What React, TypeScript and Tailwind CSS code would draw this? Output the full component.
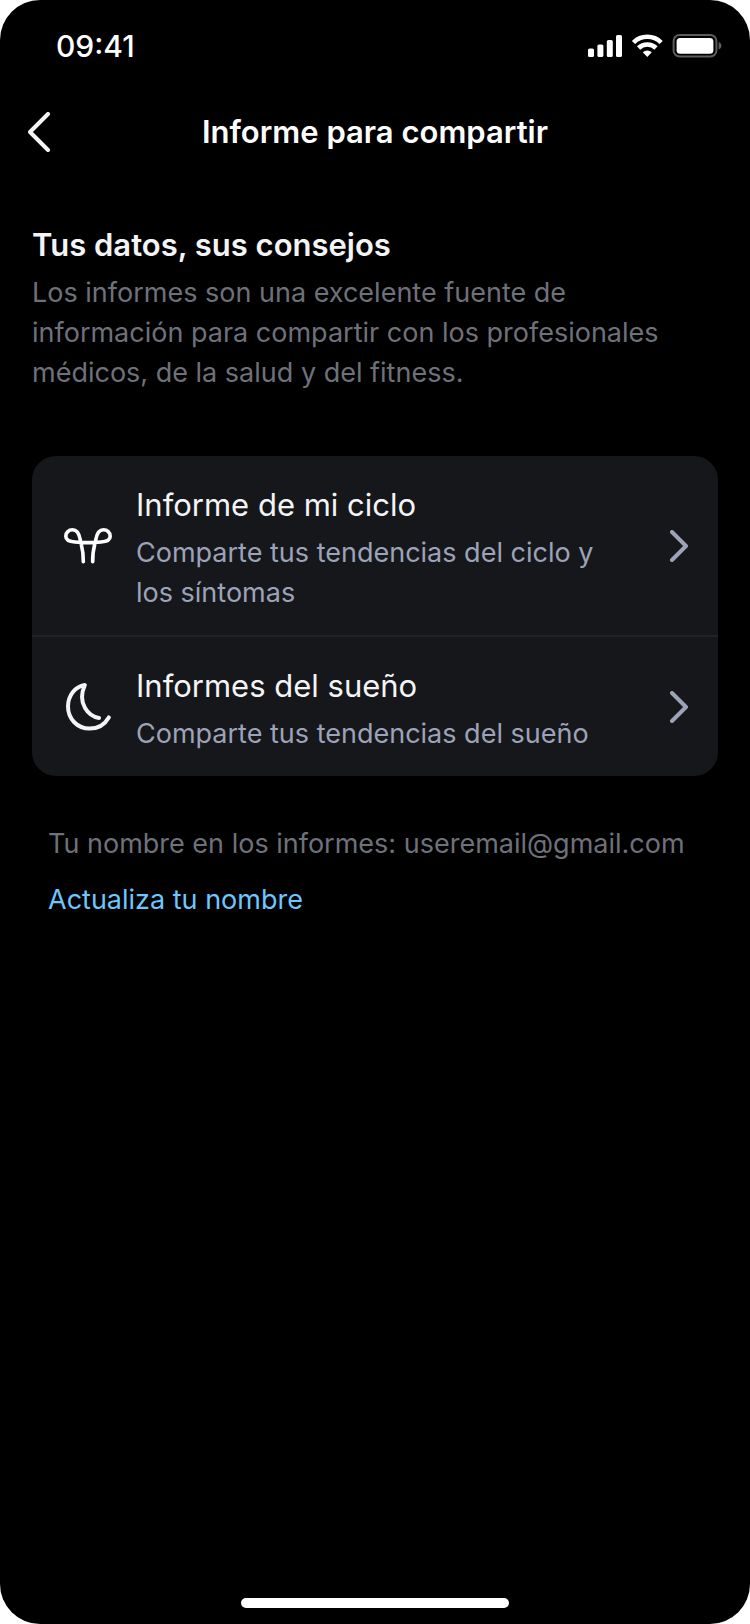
const reports = [
  {
    title: 'Informe de mi ciclo',
    text: 'Comparte tus tendencias del ciclo y los síntomas',
    Icon: CycleIcon,
  },
  {
    title: 'Informes del sueño',
    text: 'Comparte tus tendencias del sueño',
    Icon: MoonIcon,
  },
]

function CycleIcon() {
  return (
    <svg className="size-12 shrink-0" viewBox="0 0 48 48" fill="none" stroke="#fff" strokeWidth="3.6" strokeLinecap="round" aria-hidden="true">
      <path d="M19.3 39.8C19.7 29 17.3 23 16.2 17.5C15.2 12 13 7.8 8.5 7.8C4.8 7.8 1.8 10.6 1.8 14.2C1.8 18.6 6 19.6 11 20C20 20.8 28 20.8 37 20C42 19.6 46.2 18.6 46.2 14.2C46.2 10.6 43.2 7.8 39.5 7.8C35 7.8 32.8 12 31.8 17.5C30.7 23 28.3 29 28.7 39.8" />
    </svg>
  )
}

function MoonIcon() {
  return (
    <svg className="size-12 shrink-0" viewBox="0 0 48 48" fill="none" stroke="#f3f4f6" strokeWidth="4" strokeLinecap="round" strokeLinejoin="round" aria-hidden="true">
      <path d="M35 35C25 33.5 12.5 21 20.8 2C11 3.6 4 12.5 4 23.5C4 36 13.5 45.6 25.5 45.6C34.5 45.6 41 41 44.8 34.4" />
    </svg>
  )
}

function Chevron() {
  return (
    <svg className="h-8 w-5 shrink-0" viewBox="0 0 20 32" fill="none" stroke="#9ca3b8" strokeWidth="4" strokeLinecap="round" strokeLinejoin="round" aria-hidden="true">
      <path d="M3 2L17 16L3 30" />
    </svg>
  )
}

function StatusBar() {
  return (
    <div className="flex h-23 items-center justify-between pr-7 pl-14 text-white">
      <span className="text-[30px] font-medium leading-10">09:41</span>
      <svg className="h-6 w-[134px]" viewBox="0 0 134 24" fill="none" aria-hidden="true">
        <g fill="#fff">
          <rect x="0" y="14.5" width="6" height="8.5" rx="1.6" />
          <rect x="9.4" y="10.5" width="6" height="12.5" rx="1.6" />
          <rect x="18.8" y="6" width="6" height="17" rx="1.6" />
          <rect x="28" y="1" width="6" height="22" rx="1.6" />
        </g>
        <g stroke="#fff" strokeWidth="4.6">
          <path d="M45.5 8.5A19.5 19.5 0 0 1 73.1 8.5" />
          <path d="M50.6 14A12.5 12.5 0 0 1 68 14" />
        </g>
        <path d="M54.8 18.2A6.5 6.5 0 0 1 63.8 18.2L59.3 23Z" fill="#fff" />
        <rect x="85.6" y="1" width="42.8" height="21.5" rx="6" stroke="#5c5c5c" strokeWidth="2" />
        <rect x="88.6" y="4" width="36.8" height="15.8" rx="3.6" fill="#fff" />
        <path d="M130.6 8C132.5 8.8 133.5 10.2 133.5 11.8C133.5 13.4 132.5 14.8 130.6 15.6Z" fill="#5c5c5c" />
      </svg>
    </div>
  )
}

function App() {
  return (
    <div className="bg-white font-['Inter',sans-serif]">
      <div className="flex min-h-screen flex-col rounded-[40px] bg-black">
        <StatusBar />

        <header className="grid h-20 grid-cols-[48px_1fr_48px] items-center px-4">
          <button type="button" aria-label="Atrás" className="flex h-12 items-center justify-center">
            <svg className="h-10 w-6" viewBox="0 0 24 40" fill="none" stroke="#f3f4f6" strokeWidth="4" strokeLinecap="round" strokeLinejoin="round" aria-hidden="true">
              <path d="M20 2L2 20L20 38" />
            </svg>
          </button>
          <h1 className="text-center text-[31px] leading-10 font-semibold text-white">Informe para compartir</h1>
        </header>

        <main className="px-8 pt-13">
          <h2 className="text-[31px] leading-[42px] font-semibold text-[#f3f4f6]">Tus datos, sus consejos</h2>
          <p className="mt-[7px] text-[27px] leading-10 text-[#6f717a]">
            Los informes son una excelente fuente de información para compartir con los profesionales médicos, de la salud y del fitness.
          </p>

          <ul className="mt-[63px] divide-y-2 divide-[#222328] overflow-hidden rounded-3xl bg-[#16171b]">
            {reports.map(({ title, text, Icon }) => (
              <li key={title}>
                <button type="button" className="flex w-full items-center gap-6 py-[22px] pr-[29px] pl-8 text-left">
                  <Icon />
                  <span className="flex-1 pt-[5px] pr-8">
                    <span className="block text-[31px] leading-11 text-[#f3f4f6]">{title}</span>
                    <span className="mt-1.5 block text-[27px] leading-10 text-[#9ca3b8]">{text}</span>
                  </span>
                  <Chevron />
                </button>
              </li>
            ))}
          </ul>

          <div className="mt-12 flex flex-col items-start gap-4 px-4 text-[27px] leading-10">
            <p className="text-[#6f717a]">Tu nombre en los informes: useremail@gmail.com</p>
            <a href="#" className="text-[#6ec6ff]">Actualiza tu nombre</a>
          </div>
        </main>

        <div className="mx-auto mt-auto mb-4 h-2.5 w-[268px] rounded-full bg-white"></div>
      </div>
    </div>
  )
}

export default App
